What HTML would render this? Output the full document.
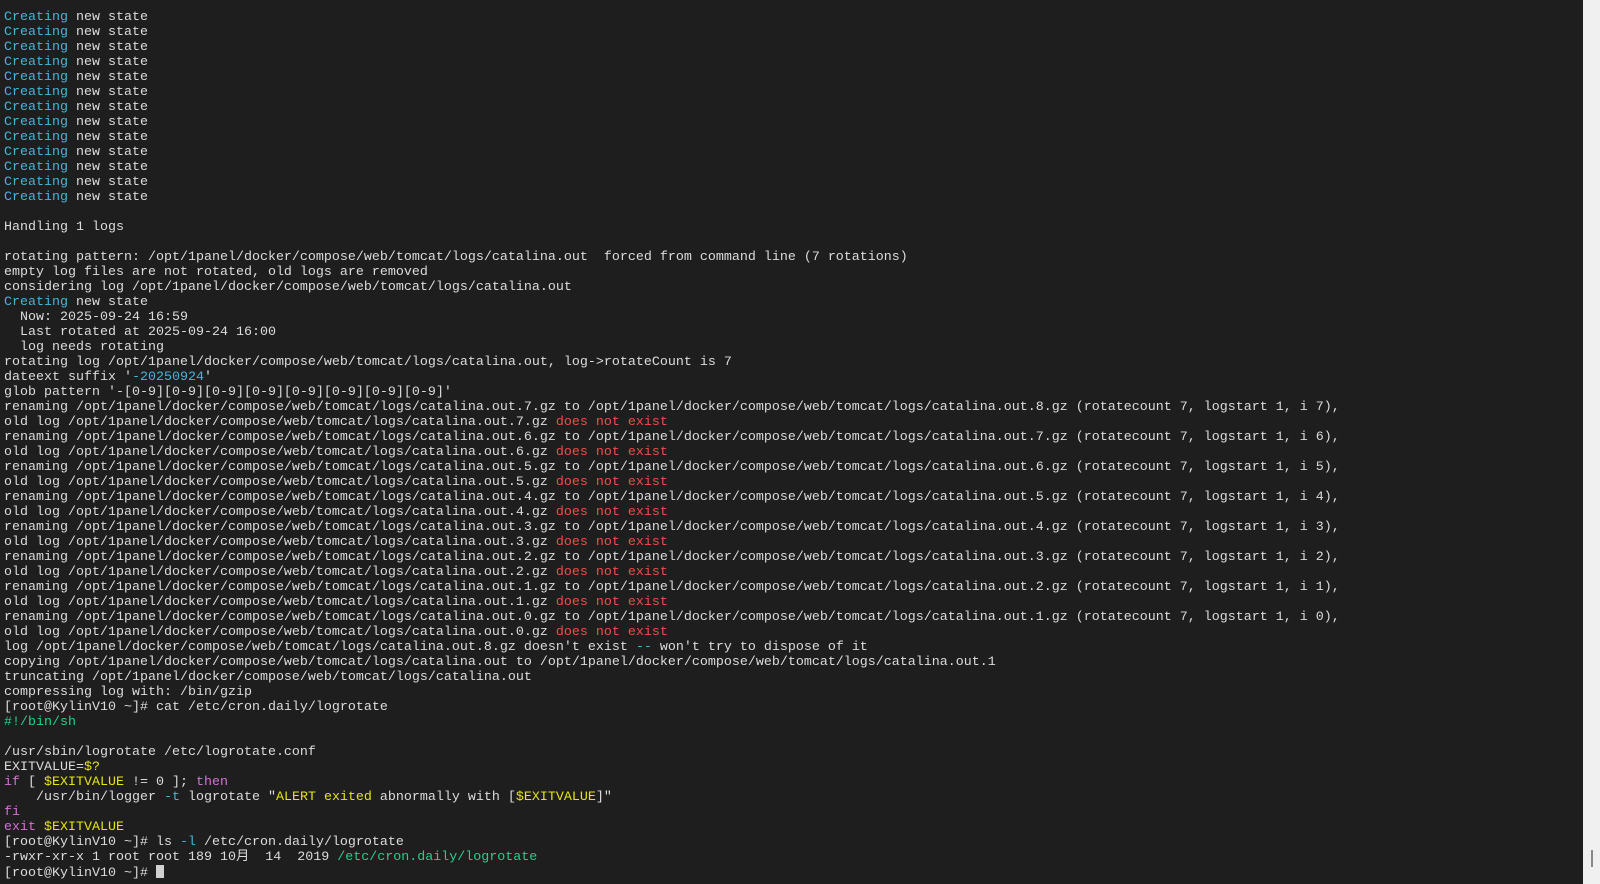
<!DOCTYPE html>
<html><head><meta charset="utf-8"><style>
html,body{margin:0;padding:0;width:1600px;height:884px;overflow:hidden;background:#1e1e1e}
pre{position:absolute;left:4px;top:9.5px;margin:0;font-family:"Liberation Mono","Noto Sans CJK SC",monospace;font-size:13.33px;line-height:15px;color:#dcdcdc;white-space:pre}
.c{color:#45b5d9}.r{color:#f14c4c}.g{color:#23d18b}.y{color:#e5e510}.m{color:#d670d6}
.sb{position:absolute;left:1583px;top:0;width:17px;height:884px;background:#f0f0f0}
.th{position:absolute;left:1591px;top:850px;width:2px;height:17px;background:#888}
.cur{display:inline-block;width:8px;height:13px;background:#d0d0d0;vertical-align:-2px}
</style></head><body>
<pre><span class="c">Creating</span> new state
<span class="c">Creating</span> new state
<span class="c">Creating</span> new state
<span class="c">Creating</span> new state
<span class="c">Creating</span> new state
<span class="c">Creating</span> new state
<span class="c">Creating</span> new state
<span class="c">Creating</span> new state
<span class="c">Creating</span> new state
<span class="c">Creating</span> new state
<span class="c">Creating</span> new state
<span class="c">Creating</span> new state
<span class="c">Creating</span> new state

Handling 1 logs

rotating pattern: /opt/1panel/docker/compose/web/tomcat/logs/catalina.out  forced from command line (7 rotations)
empty log files are not rotated, old logs are removed
considering log /opt/1panel/docker/compose/web/tomcat/logs/catalina.out
<span class="c">Creating</span> new state
  Now: 2025-09-24 16:59
  Last rotated at 2025-09-24 16:00
  log needs rotating
rotating log /opt/1panel/docker/compose/web/tomcat/logs/catalina.out, log->rotateCount is 7
dateext suffix '<span class="c">-20250924</span>'
glob pattern '-[0-9][0-9][0-9][0-9][0-9][0-9][0-9][0-9]'
renaming /opt/1panel/docker/compose/web/tomcat/logs/catalina.out.7.gz to /opt/1panel/docker/compose/web/tomcat/logs/catalina.out.8.gz (rotatecount 7, logstart 1, i 7),
old log /opt/1panel/docker/compose/web/tomcat/logs/catalina.out.7.gz <span class="r">does not exist</span>
renaming /opt/1panel/docker/compose/web/tomcat/logs/catalina.out.6.gz to /opt/1panel/docker/compose/web/tomcat/logs/catalina.out.7.gz (rotatecount 7, logstart 1, i 6),
old log /opt/1panel/docker/compose/web/tomcat/logs/catalina.out.6.gz <span class="r">does not exist</span>
renaming /opt/1panel/docker/compose/web/tomcat/logs/catalina.out.5.gz to /opt/1panel/docker/compose/web/tomcat/logs/catalina.out.6.gz (rotatecount 7, logstart 1, i 5),
old log /opt/1panel/docker/compose/web/tomcat/logs/catalina.out.5.gz <span class="r">does not exist</span>
renaming /opt/1panel/docker/compose/web/tomcat/logs/catalina.out.4.gz to /opt/1panel/docker/compose/web/tomcat/logs/catalina.out.5.gz (rotatecount 7, logstart 1, i 4),
old log /opt/1panel/docker/compose/web/tomcat/logs/catalina.out.4.gz <span class="r">does not exist</span>
renaming /opt/1panel/docker/compose/web/tomcat/logs/catalina.out.3.gz to /opt/1panel/docker/compose/web/tomcat/logs/catalina.out.4.gz (rotatecount 7, logstart 1, i 3),
old log /opt/1panel/docker/compose/web/tomcat/logs/catalina.out.3.gz <span class="r">does not exist</span>
renaming /opt/1panel/docker/compose/web/tomcat/logs/catalina.out.2.gz to /opt/1panel/docker/compose/web/tomcat/logs/catalina.out.3.gz (rotatecount 7, logstart 1, i 2),
old log /opt/1panel/docker/compose/web/tomcat/logs/catalina.out.2.gz <span class="r">does not exist</span>
renaming /opt/1panel/docker/compose/web/tomcat/logs/catalina.out.1.gz to /opt/1panel/docker/compose/web/tomcat/logs/catalina.out.2.gz (rotatecount 7, logstart 1, i 1),
old log /opt/1panel/docker/compose/web/tomcat/logs/catalina.out.1.gz <span class="r">does not exist</span>
renaming /opt/1panel/docker/compose/web/tomcat/logs/catalina.out.0.gz to /opt/1panel/docker/compose/web/tomcat/logs/catalina.out.1.gz (rotatecount 7, logstart 1, i 0),
old log /opt/1panel/docker/compose/web/tomcat/logs/catalina.out.0.gz <span class="r">does not exist</span>
log /opt/1panel/docker/compose/web/tomcat/logs/catalina.out.8.gz doesn't exist <span class="c">--</span> won't try to dispose of it
copying /opt/1panel/docker/compose/web/tomcat/logs/catalina.out to /opt/1panel/docker/compose/web/tomcat/logs/catalina.out.1
truncating /opt/1panel/docker/compose/web/tomcat/logs/catalina.out
compressing log with: /bin/gzip
[root@KylinV10 ~]# cat /etc/cron.daily/logrotate
<span class="g">#!/bin/sh</span>

/usr/sbin/logrotate /etc/logrotate.conf
EXITVALUE=<span class="y">$?</span>
<span class="m">if</span> [ <span class="y">$EXITVALUE</span> != 0 ]; <span class="m">then</span>
    /usr/bin/logger <span class="c">-t</span> logrotate "<span class="y">ALERT exited</span> abnormally with [<span class="y">$EXITVALUE</span>]"
<span class="m">fi</span>
<span class="m">exit</span> <span class="y">$EXITVALUE</span>
[root@KylinV10 ~]# ls <span class="c">-l</span> /etc/cron.daily/logrotate
-rwxr-xr-x 1 root root 189 10月  14  2019 <span class="g">/etc/cron.daily/logrotate</span>
[root@KylinV10 ~]# <span class="cur"></span></pre>
<div class="sb"></div><div class="th"></div>
</body></html>
